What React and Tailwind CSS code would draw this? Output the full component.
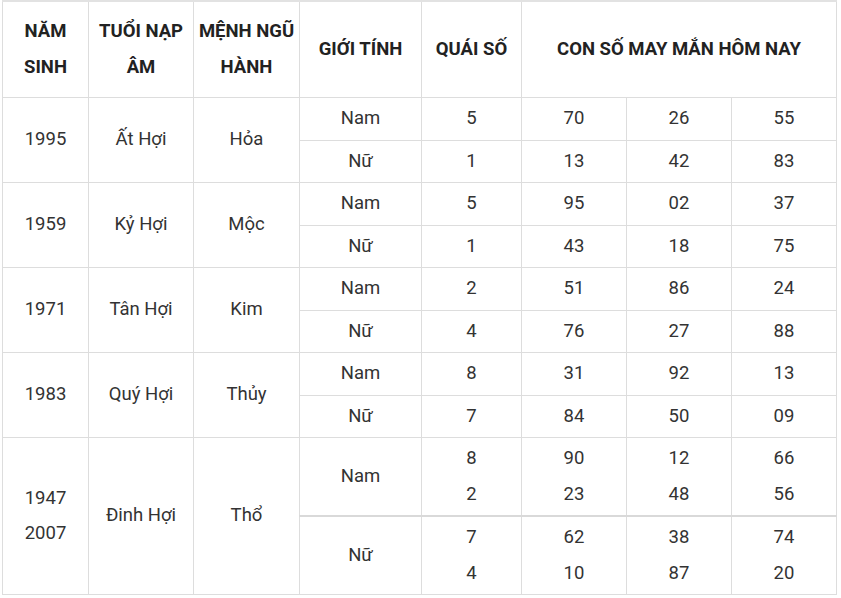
const groups = [
  {
    year: ['1995'],
    tuoi: 'Ất Hợi',
    menh: 'Hỏa',
    rows: [
      { g: 'Nam', q: ['5'], n: [['70'], ['26'], ['55']] },
      { g: 'Nữ', q: ['1'], n: [['13'], ['42'], ['83']] },
    ],
  },
  {
    year: ['1959'],
    tuoi: 'Kỷ Hợi',
    menh: 'Mộc',
    rows: [
      { g: 'Nam', q: ['5'], n: [['95'], ['02'], ['37']] },
      { g: 'Nữ', q: ['1'], n: [['43'], ['18'], ['75']] },
    ],
  },
  {
    year: ['1971'],
    tuoi: 'Tân Hợi',
    menh: 'Kim',
    rows: [
      { g: 'Nam', q: ['2'], n: [['51'], ['86'], ['24']] },
      { g: 'Nữ', q: ['4'], n: [['76'], ['27'], ['88']] },
    ],
  },
  {
    year: ['1983'],
    tuoi: 'Quý Hợi',
    menh: 'Thủy',
    rows: [
      { g: 'Nam', q: ['8'], n: [['31'], ['92'], ['13']] },
      { g: 'Nữ', q: ['7'], n: [['84'], ['50'], ['09']] },
    ],
  },
  {
    year: ['1947', '2007'],
    tuoi: 'Đinh Hợi',
    menh: 'Thổ',
    thick: true,
    rows: [
      { g: 'Nam', q: ['8', '2'], n: [['90', '23'], ['12', '48'], ['66', '56']] },
      { g: 'Nữ', q: ['7', '4'], n: [['62', '10'], ['38', '87'], ['74', '20']] },
    ],
  },
];

function Lines({ items }) {
  return items.map((t, i) => (
    <span key={i}>
      {i > 0 && <br />}
      {t}
    </span>
  ));
}

const td = 'border border-[#dddddd] px-1 py-[3px] text-center align-middle';
const th = 'border border-[#dddddd] border-t-2 border-t-[#e2e2e2] px-1 py-[12px] text-center align-middle font-bold text-[#222222]';

export default function App() {
  return (
    <div className="min-h-screen bg-white pl-[2px]" style={{ fontFamily: 'Roboto, "Noto Sans", sans-serif' }}>
      <table className="table-fixed border-collapse text-[18.5px] leading-[35.5px] text-[#333333]">
        <colgroup>
          <col className="w-[86px]" />
          <col className="w-[105px]" />
          <col className="w-[106px]" />
          <col className="w-[122px]" />
          <col className="w-[100px]" />
          <col className="w-[105px]" />
          <col className="w-[105px]" />
          <col className="w-[105px]" />
        </colgroup>
        <thead>
          <tr>
            <th className={th}>NĂM<br />SINH</th>
            <th className={th}>TUỔI NẠP<br />ÂM</th>
            <th className={th}>MỆNH NGŨ<br />HÀNH</th>
            <th className={th}>GIỚI TÍNH</th>
            <th className={th}>QUÁI SỐ</th>
            <th className={th} colSpan={3}>CON SỐ MAY MẮN HÔM NAY</th>
          </tr>
        </thead>
        <tbody>
          {groups.map((g) =>
            g.rows.map((r, i) => {
              const sep = g.thick && i === 1 ? ' border-t-2 border-t-[#d9d9d9]' : '';
              return (
                <tr key={g.tuoi + r.g}>
                  {i === 0 && (
                    <>
                      <td className={td} rowSpan={2}><Lines items={g.year} /></td>
                      <td className={td} rowSpan={2}>{g.tuoi}</td>
                      <td className={td} rowSpan={2}>{g.menh}</td>
                    </>
                  )}
                  <td className={td + sep}>{r.g}</td>
                  <td className={td + sep}><Lines items={r.q} /></td>
                  {r.n.map((n, j) => (
                    <td key={j} className={td + sep}><Lines items={n} /></td>
                  ))}
                </tr>
              );
            })
          )}
        </tbody>
      </table>
    </div>
  );
}
